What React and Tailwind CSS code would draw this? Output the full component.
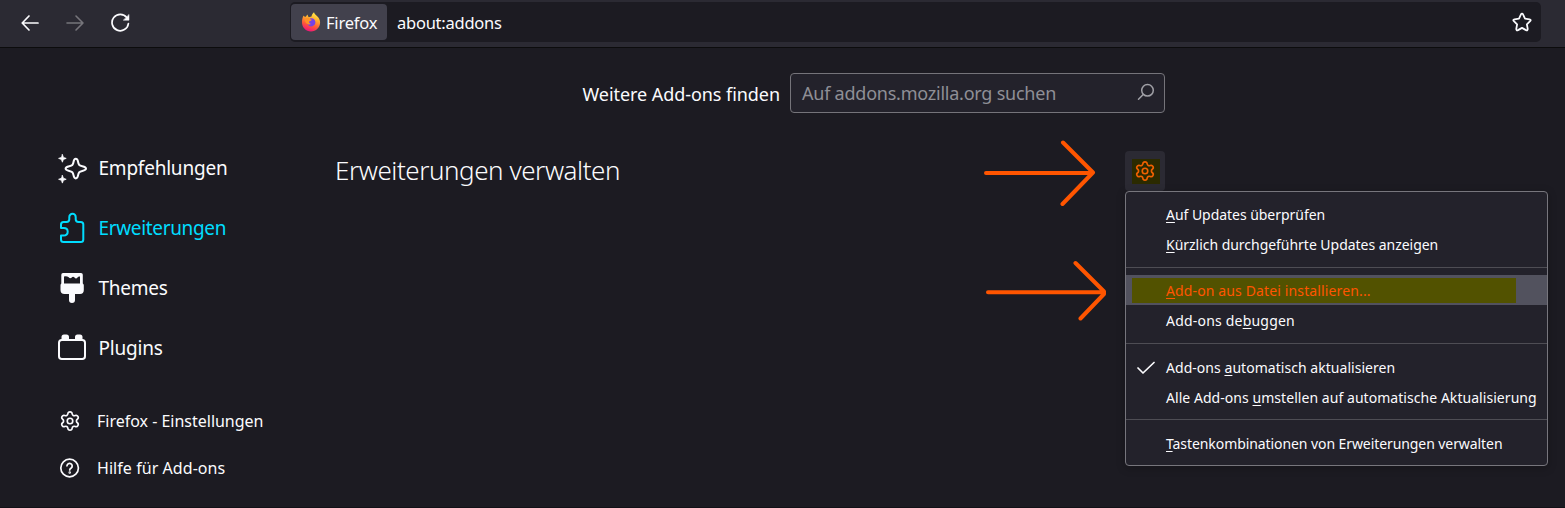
import React from "react";
import { Settings } from "lucide-react";

function FirefoxLogo() {
  return (
    <svg className="h-5 w-5 shrink-0" viewBox="0 0 20 20">
      <defs>
        <linearGradient id="flame" x1="0.75" y1="0" x2="0.4" y2="1">
          <stop offset="0" stopColor="#fff44f" />
          <stop offset="0.35" stopColor="#ffb02e" />
          <stop offset="0.68" stopColor="#ff5a36" />
          <stop offset="1" stopColor="#f0147a" />
        </linearGradient>
      </defs>
      <path d="M2.4 3.6 C3 4.7 4 4.8 4.8 4.8 C5.2 3.9 5.9 3.1 6.8 2.6 C6.7 3.800 7 4.600 7.800 5.200 L10.500 4.600 C10.800 2.800 11.500 1.400 13 .2 C13.600 2.300 15.400 3.200 16.700 4.800 C18.300 6.600 19.100 8.200 19.100 10.600 C19.100 15.600 15 19.500 10 19.500 C4.900 19.500 1 15.600 1 10.600 C1 8 1.500 5.800 2.400 3.600Z" fill="url(#flame)" />
      <path d="M9 6.400 C12 5.400 14.600 7.600 14.400 10.600 C14.200 13.200 12 14.600 10 14.400 C7.600 14.200 6 12.400 6.200 10.200 C7 9.800 8.400 9.600 9.600 8.600Z" fill="#7542e5" />
      <path d="M3.500 6.500 C6 5.600 8.400 6 9.500 7.400 L11 7.800 C10.600 8.800 9 8.900 8.200 9.600 C7.800 10.800 8.600 11.800 10 12 C7.200 13.500 3.800 11.500 3.500 6.500Z" fill="#ff9226" />
    </svg>
  );
}

const stroke = { fill: "none", stroke: "currentColor", strokeLinecap: "round", strokeLinejoin: "round" };

function SparkIcon() {
  return (
    <svg className="h-[34px] w-8" viewBox="56 151 32 34" {...stroke} strokeWidth="2">
      <path d="M75.800 158.800 c1.600 0 2 1.500 2.300 3.200 c.5 3 1.200 3.600 4.200 4.200 c2 .4 3.700 .8 3.700 2.400 s-1.700 2-3.700 2.400 c-3 .6-3.700 1.200-4.200 4.200 c-.3 1.700-.7 3.200-2.300 3.200 s-2-1.500-2.300-3.200 c-.5-3-1.200-3.600-4.200-4.200 c-2-.4-3.700-.8-3.700-2.400 s1.700-2 3.700-2.400 c3-.6 3.700-1.200 4.200-4.200 c.3-1.700 .7-3.200 2.300-3.200Z" />
      <path d="M62.400 154.600 l1 2.800 2.800 1 -2.800 1 -1 2.800 -1-2.800 -2.800-1 2.800-1Z M62.400 175.500 l1 2.800 2.800 1 -2.800 1 -1 2.800 -1-2.800 -2.800-1 2.800-1Z" fill="currentColor" strokeWidth="0.800" />
    </svg>
  );
}

function PuzzleIcon() {
  return (
    <svg className="h-[34px] w-8" viewBox="56 211 32 34" {...stroke} strokeWidth="2">
      <path d="M61 228 V224.500 q0-2.500 2.500-2.500 H66.500 Q69.300 222 69.300 219.300 V217 a3.200 3.200 0 0 1 6.400 0 v2.300 q0 2.700 2.800 2.700 h2.300 q2.500 0 2.500 2.500 v15 q0 2.500-2.500 2.500 H63.500 q-2.500 0-2.500-2.500 V235.500 h2.500 q4.200 0 4.200-3.800 t-4.200-3.700 Z" />
    </svg>
  );
}

function BrushIcon() {
  return (
    <svg className="h-[34px] w-8" viewBox="56 271 32 34" fill="currentColor">
      <path fillRule="evenodd" d="M63 273 H81 Q82.800 273 82.800 274.800 V283.500 Q83.800 284 83.800 285.500 V290 Q83.800 294 80 294 H75 V300 A3 3 0 0 1 69 300 V294 H64.500 Q60.500 294 60.500 290 V285.500 Q60.500 284 61.300 283.500 V274.800 Q61.300 273 63 273Z M64 276.500 V283.500 H80 V276.500 Q78.500 276 77.500 277.500 Q76 279.500 74.500 277.500 Q73 276 71.500 277.800 Q70 279 68.700 277.300 Q66.500 275.500 64 276.500Z" />
    </svg>
  );
}

function PluginIcon() {
  return (
    <svg className="h-[34px] w-8" viewBox="56 331 32 34">
      <rect x="59" y="340" width="26" height="19" rx="2.800" {...stroke} strokeWidth="2" />
      <path d="M61.500 340 V337 Q61.500 334.400 64 334.400 H66.500 Q69 334.400 69 337 V340Z M75 340 V337 Q75 334.400 77.500 334.400 H80 Q82.500 334.400 82.500 337 V340Z" fill="currentColor" />
    </svg>
  );
}

const categories = [
  { label: "Empfehlungen", Icon: SparkIcon, cls: "text-[#fbfbfe] tracking-[-0.22px]" },
  { label: "Erweiterungen", Icon: PuzzleIcon, cls: "text-[#00ddff] tracking-[-0.34px]" },
  { label: "Themes", Icon: BrushIcon, cls: "text-[#fbfbfe] tracking-[-0.25px]" },
  { label: "Plugins", Icon: PluginIcon, cls: "text-[#fbfbfe] tracking-[-0.2px]" },
];

function Item({ pre = "", k, post, cls = "" }) {
  return (
    <div className={"flex h-[30px] items-center pl-10 whitespace-nowrap " + cls}>
      <span>{pre}<span className="underline decoration-1 underline-offset-2">{k}</span>{post}</span>
    </div>
  );
}

function Arrow({ className, viewBox, d }) {
  return (
    <svg className={"absolute " + className} viewBox={viewBox} fill="none" stroke="#ff5500" strokeWidth="4" strokeLinecap="round" strokeLinejoin="round">
      <path d={d} />
    </svg>
  );
}

export default function App() {
  return (
    <div className="relative flex h-[508px] w-[1565px] flex-col overflow-hidden border-b border-[#121117] bg-[#1c1b22] font-['Noto_Sans','Open_Sans',sans-serif] text-[#fbfbfe]">
      <header className="flex h-12 shrink-0 items-start border-b border-[#0c0c0d] bg-[#2b2a33]">
        <nav className="flex w-[290px] shrink-0 items-center gap-[25px] pt-[13px] pl-[21px]">
          <svg className="h-5 w-5" viewBox="20 13 20 20" {...stroke} strokeWidth="1.700">
            <path d="M37 23 H21.500 M28 16 L21.200 23 L28 30" />
          </svg>
          <svg className="h-5 w-5 text-[#76757b]" viewBox="64 13 20 20" {...stroke} strokeWidth="1.600">
            <path d="M65 23 H81 M74 16 L81 23 L74 30" />
          </svg>
          <svg className="h-5 w-5" viewBox="107 13 20 20" {...stroke} strokeWidth="1.700">
            <path d="M122.800 17.600 A8.200 8.200 0 1 0 124.400 23.500" />
            <path d="M125 14.800 V20.200 H119.600Z" fill="currentColor" strokeWidth="0.500" />
          </svg>
        </nav>
        <div className="mt-0.5 flex h-10 w-[1251px] items-center rounded-[5px] bg-[#1c1b22] pl-px">
          <div className="flex h-9 w-24 items-center rounded bg-[#42414d] pl-2.5">
            <FirefoxLogo />
            <span className="ml-[5px] pt-[3px] text-[16.500px] tracking-[-0.200px]">Firefox</span>
          </div>
          <span className="ml-2.5 pt-[3px] text-[16.500px] tracking-[-0.240px]">about:addons</span>
          <svg className="mr-2 ml-auto h-[22px] w-[22px]" viewBox="1511 11 22 22" {...stroke} strokeWidth="1.800">
            <path d="M1522 13.600 q.7 0 1.100 .9 l1.900 4.200 4.500 .6 q2 .4 .6 1.900 l-3.200 3.100 .8 4.600 q.1 2-1.700 1.200 l-4-2.200 -4 2.200 q-1.800 .8-1.700-1.200 l.8-4.600 -3.200-3.100 q-1.400-1.500 .6-1.900 l4.500-.6 1.900-4.200 q.4-.9 1.100-.9Z" />
          </svg>
        </div>
      </header>

      <div className="flex grow">
        <aside className="flex w-[335px] shrink-0 flex-col pt-[90px] pl-14">
          {categories.map(({ label, Icon, cls }) => (
            <div key={label} className={"flex h-15 items-center gap-[10.500px] text-[19px] " + cls}>
              <Icon />
              <span>{label}</span>
            </div>
          ))}
          <div className="mt-[19px] flex h-[47px] items-center gap-4 pl-[3px] text-[16px] tracking-[-0.010px]">
            <Settings size={22} strokeWidth={1.800} />
            <span>Firefox - Einstellungen</span>
          </div>
          <div className="flex h-[47px] items-center gap-4 pl-[3px] text-[16px] tracking-[0.060px]">
            <svg className="h-[22px] w-[22px]" viewBox="0 0 22 22" {...stroke} strokeWidth="1.700">
              <circle cx="10.600" cy="11" r="8.800" />
              <path d="M8 8.800 a2.600 2.600 0 1 1 4.200 2.200 q-1.500 .9-1.500 2" />
              <circle cx="10.700" cy="15.600" r="0.400" fill="currentColor" />
            </svg>
            <span>Hilfe für Add-ons</span>
          </div>
        </aside>

        <main className="w-[830px] pt-[25px]">
          <div className="flex h-10 items-center justify-end">
            <span className="mr-2.5 pt-0.5 text-[18px] tracking-[-0.060px]">Weitere Add-ons finden</span>
            <div className="flex h-10 w-[375px] items-center rounded border border-[#75747a] bg-[#23222b] pl-[11px]">
              <span className="text-[18px] tracking-[-0.230px] text-[#8f8f96]">Auf addons.mozilla.org suchen</span>
              <svg className="mr-2 ml-auto h-5 w-5 text-[#a0a0a6]" viewBox="1136 83 20 20" {...stroke} strokeWidth="1.500">
                <circle cx="1147.500" cy="90.300" r="5.800" />
                <path d="M1143.200 94.500 L1138.500 99.300" />
              </svg>
            </div>
          </div>
          <div className="mt-[38px] flex h-10 items-center justify-between">
            <h1 className="pb-0.5 text-[26px] font-light tracking-[-0.450px]">Erweiterungen verwalten</h1>
            <div className="flex h-10 w-10 items-center justify-center rounded bg-[#2b2a33]">
              <div className="mt-px ml-px flex h-[25px] w-7 items-center justify-center bg-[#2b2a00] pr-px pb-px text-[#f26100]">
                <Settings size={22} strokeWidth={1.800} />
              </div>
            </div>
          </div>
        </main>
      </div>

      <div className="absolute top-[191px] left-[1125px] h-[275px] w-[423px] rounded border border-[#77767d] bg-[#23222b] pt-[7px] text-[14px] shadow-[0_2px_8px_rgba(0,0,0,0.25)]">
        <Item k="A" post="uf Updates überprüfen" cls="tracking-[-0.040px]" />
        <Item k="K" post="ürzlich durchgeführte Updates anzeigen" cls="tracking-[-0.030px]" />
        <div className="mt-2 mb-[7px] h-px bg-[#4e4d54]" />
        <div className="flex h-[30px] items-center bg-[#52525e] pl-1.5">
          <div className="flex h-[25px] w-[384px] items-center bg-[#525200] text-[#ff5500]">
            <Item k="A" post="dd-on aus Datei installieren..." cls="-ml-1.5 tracking-[0.130px]" />
          </div>
        </div>
        <Item pre="Add-ons de" k="b" post="uggen" cls="tracking-[0.200px]" />
        <div className="my-2 h-px bg-[#4e4d54]" />
        <div className="relative">
          <svg className="absolute top-[9px] left-[11px] h-3.5 w-[18px]" viewBox="0 0 18 14" {...stroke} strokeWidth="1.700">
            <path d="M1 7 L6 12 L17 1.500" />
          </svg>
          <Item pre="Add-ons " k="a" post="utomatisch aktualisieren" cls="tracking-[0.040px]" />
        </div>
        <Item pre="Alle Add-ons " k="u" post="mstellen auf automatische Aktualisierung" cls="tracking-[0.050px]" />
        <div className="mt-[7px] mb-2 h-px bg-[#4e4d54]" />
        <Item k="T" post="astenkombinationen von Erweiterungen verwalten" cls="tracking-[-0.080px]" />
      </div>

      <Arrow className="top-[138px] left-[980px] h-[70px] w-[120px]" viewBox="980 138 120 70" d="M986 173 H1092 M1063 142.500 L1093 172.500 L1062.500 204" />
      <Arrow className="top-[258px] left-[980px] h-[66px] w-[130px]" viewBox="980 258 130 66" d="M988 292.300 H1103 M1075.500 263 L1104 291.500 V294 L1080.500 318.500" />
    </div>
  );
}
